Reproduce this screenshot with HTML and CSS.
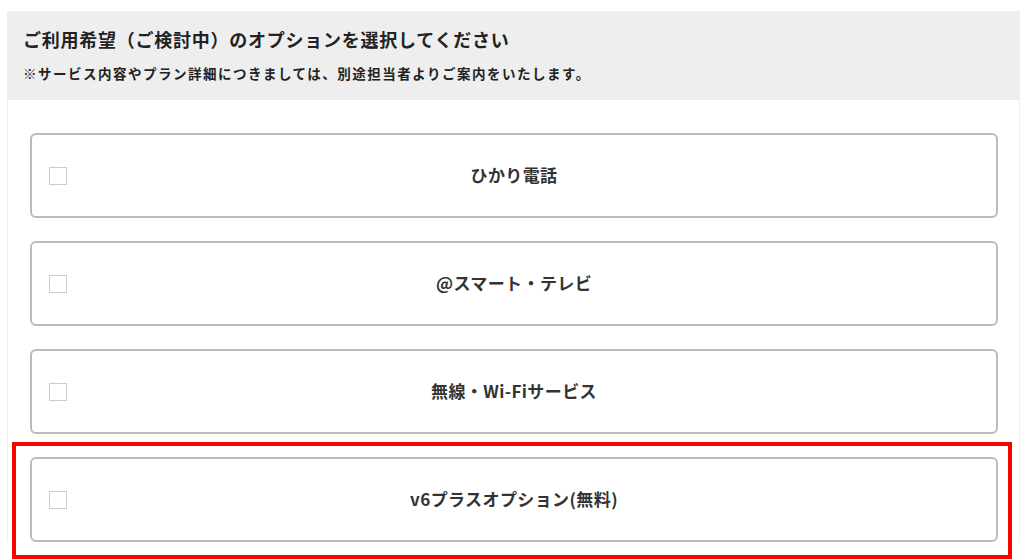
FILE: index.html
```html
<!DOCTYPE html>
<html lang="ja">
<head>
    <meta charset="UTF-8" />
    <meta name="viewport" content="width=device-width, initial-scale=1.0" />
    <title>オプション選択</title>
    <link rel="stylesheet" href="styles.css">
</head>
<body>
    <section class="panel">
        <div class="panel-head">
            <h2>ご利用希望（ご検討中）のオプションを選択してください</h2>
            <p>※サービス内容やプラン詳細につきましては、別途担当者よりご案内をいたします。</p>
        </div>
        <div class="options">
            <label class="option">
                <span class="check"></span>
                <span class="option-name">ひかり電話</span>
            </label>
            <label class="option">
                <span class="check"></span>
                <span class="option-name">@スマート・テレビ</span>
            </label>
            <label class="option">
                <span class="check"></span>
                <span class="option-name">無線・Wi-Fiサービス</span>
            </label>
            <label class="option marked">
                <span class="check"></span>
                <span class="option-name">v6プラスオプション(無料)</span>
            </label>
        </div>
    </section>
</body>
</html>
```

FILE: styles.css
```css
body {
    font-family: "Noto Sans CJK JP", "Noto Sans", sans-serif;
    background: #ffffff;
    color: #222;
    margin: 0;
    padding: 0;
}
.panel {
    margin: 11px 4px 0 7px;
    border-left: 1px solid #eeeeee;
    border-right: 1px solid #eeeeee;
}
.panel-head {
    background: #eeeeee;
    margin: 0 -1px;
    padding: 14px 16px 17px;
}
.panel-head h2 {
    font-size: 18px;
    font-weight: bold;
    letter-spacing: 0.75px;
    line-height: 28px;
    margin: 0;
}
.panel-head p {
    font-size: 13.5px;
    font-weight: bold;
    letter-spacing: 1.5px;
    line-height: 20px;
    margin: 10px 0 0;
}
.options {
    padding: 33px 21px 0 22px;
}
.option {
    position: relative;
    display: flex;
    align-items: center;
    height: 85px;
    box-sizing: border-box;
    border: 2px solid #bbbbbb;
    border-radius: 6px;
    padding: 0 17px;
    margin-bottom: 23px;
    cursor: pointer;
}
.check {
    width: 18px;
    height: 18px;
    box-sizing: border-box;
    border: 1px solid #cccccc;
    background: #fff;
}
.option-name {
    flex: 1;
    margin-right: 18px;
    padding-bottom: 3px;
    text-align: center;
    font-size: 17px;
    font-weight: bold;
    letter-spacing: 0.4px;
    color: #333;
}
.marked::after {
    content: "";
    position: absolute;
    top: -17px;
    left: -20px;
    right: -16px;
    bottom: -19px;
    border: 4px solid #ff0000;
}
```
